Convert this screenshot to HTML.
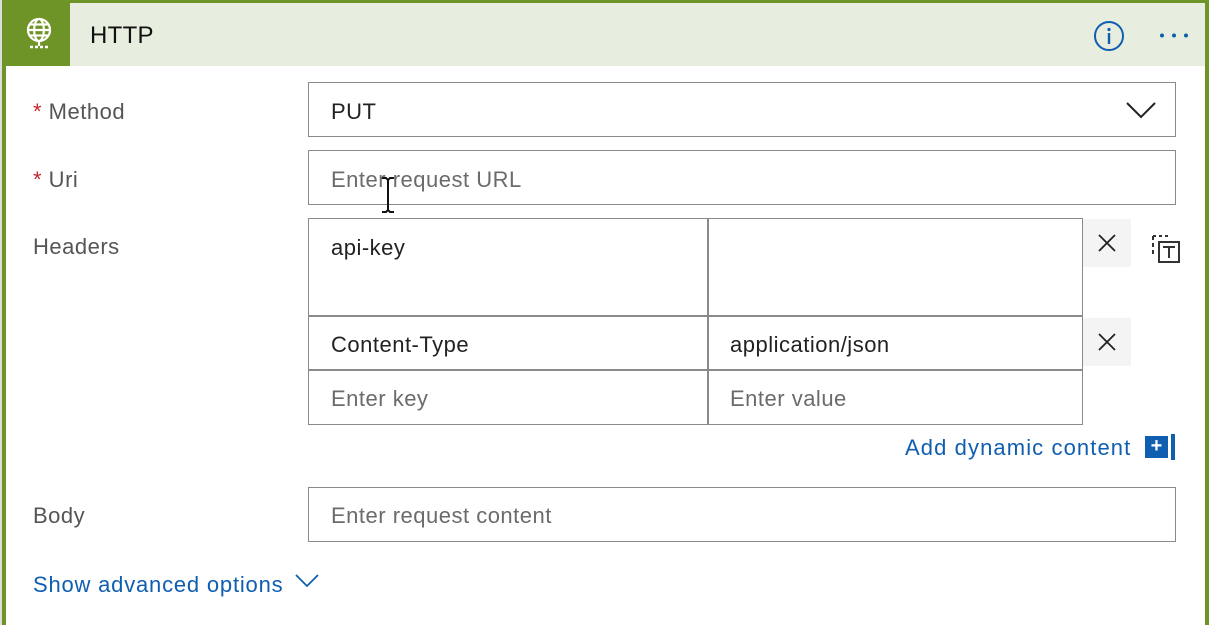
<!DOCTYPE html>
<html><head><style>
html,body{margin:0;width:1210px;height:625px;overflow:hidden;background:#fff;font-family:"Liberation Sans",sans-serif;position:relative}
.a{position:absolute}
.card{left:2px;top:0;width:1207px;height:625px;border:4px solid #6e9326;border-top-width:3px;border-bottom:0;box-sizing:border-box}
.hdr{left:6px;top:3px;width:1199px;height:63px;background:#e7eedf}
.ico{left:6px;top:3px;width:64px;height:63px;background:#6e9326}
.t,.lab,.ph,.blue{font-size:22px;letter-spacing:0.5px;white-space:nowrap}
.t{color:#222}
.lab{color:#555}
.star{color:#c4262e}
.box{border:1px solid #8a8a8a;box-sizing:border-box;background:#fff}
.ph{color:#6b6b6b}
.x{background:#f4f4f4;width:48px;height:48px}
.blue{color:#0f5eb0}
</style></head><body>
<div class="a card"></div>
<div class="a" style="left:0;top:0;width:2px;height:625px;background:#ddd"></div>
<div class="a hdr"></div>
<div class="a ico"></div>
<svg class="a" style="left:23px;top:16px" width="32" height="36" viewBox="0 0 32 36" fill="none" stroke="#fff" stroke-width="2.2">
<circle cx="16" cy="14" r="11"/><ellipse cx="16" cy="14" rx="4.8" ry="11"/><line x1="5" y1="14" x2="27" y2="14"/><line x1="6.5" y1="8.5" x2="25.5" y2="8.5"/><line x1="6.5" y1="19.5" x2="25.5" y2="19.5"/><line x1="16" y1="25" x2="16" y2="30"/><line x1="7" y1="31" x2="25" y2="31" stroke-width="2.6" stroke-dasharray="3 2"/></svg>
<div class="a t" style="left:90px;top:22px;font-size:24px;color:#111;letter-spacing:0.3px">HTTP</div>
<svg class="a" style="left:1093px;top:20px" width="32" height="32" viewBox="0 0 32 32"><circle cx="16" cy="16" r="14" fill="none" stroke="#0f5eb0" stroke-width="2"/><circle cx="16" cy="9.5" r="1.6" fill="#0f5eb0"/><rect x="14.8" y="13" width="2.4" height="11" fill="#0f5eb0"/></svg>
<svg class="a" style="left:1158px;top:32px" width="32" height="8"><circle cx="4" cy="3.5" r="2" fill="#0f5eb0"/><circle cx="16" cy="3.5" r="2" fill="#0f5eb0"/><circle cx="28" cy="3.5" r="2" fill="#0f5eb0"/></svg>

<div class="a lab" style="left:33px;top:99px"><span class="star">*</span> Method</div>
<div class="a box" style="left:308px;top:82px;width:868px;height:55px"></div>
<div class="a t" style="left:331px;top:99px">PUT</div>
<svg class="a" style="left:1125px;top:100px" width="32" height="20"><path d="M2 3 L16 17 L30 3" fill="none" stroke="#222" stroke-width="2"/></svg>

<div class="a lab" style="left:33px;top:167px"><span class="star">*</span> Uri</div>
<div class="a box" style="left:308px;top:150px;width:868px;height:55px"></div>
<div class="a ph" style="left:331px;top:167px">Enter request URL</div>
<svg class="a" style="left:378px;top:176px" width="20" height="38"><path d="M4 2h4l2 2 2-2h4M10 4v30M4 36h4l2-2 2 2h4" fill="none" stroke="#111" stroke-width="2"/></svg>

<div class="a lab" style="left:33px;top:234px">Headers</div>
<div class="a box" style="left:308px;top:218px;width:775px;height:207px"></div>
<div class="a" style="left:707px;top:218px;width:2px;height:207px;background:#8a8a8a"></div>
<div class="a" style="left:308px;top:315px;width:775px;height:2px;background:#8a8a8a"></div>
<div class="a" style="left:308px;top:369px;width:775px;height:2px;background:#8a8a8a"></div>
<div class="a t" style="left:331px;top:235px">api-key</div>
<div class="a t" style="left:331px;top:332px">Content-Type</div>
<div class="a t" style="left:730px;top:332px">application/json</div>
<div class="a ph" style="left:331px;top:386px">Enter key</div>
<div class="a ph" style="left:730px;top:386px">Enter value</div>
<div class="a x" style="left:1083px;top:219px"></div>
<div class="a x" style="left:1083px;top:318px"></div>
<svg class="a" style="left:1097px;top:233px" width="20" height="20"><path d="M2 2L18 18M18 2L2 18" stroke="#222" stroke-width="1.8"/></svg>
<svg class="a" style="left:1097px;top:332px" width="20" height="20"><path d="M2 2L18 18M18 2L2 18" stroke="#222" stroke-width="1.8"/></svg>
<svg class="a" style="left:1150px;top:233px" width="32" height="32" viewBox="0 0 32 32" fill="none" stroke="#333" stroke-width="2"><path d="M3 3h3M9 3h3M15 3h3M3 3v4M3 10v4M3 17v4"/><rect x="9" y="9" width="20" height="20"/><path d="M13 14h12M19 14v11"/></svg>

<div class="a blue" style="left:905px;top:435px;letter-spacing:1.1px">Add dynamic content</div>
<div class="a" style="left:1145px;top:436px;width:23px;height:22px;background:#0f5eb0;color:#fff;font-size:20px;font-weight:bold;text-align:center;line-height:21px">+</div>
<div class="a" style="left:1171px;top:434px;width:4px;height:26px;background:#0f5eb0"></div>

<div class="a lab" style="left:33px;top:503px">Body</div>
<div class="a box" style="left:308px;top:487px;width:868px;height:55px"></div>
<div class="a ph" style="left:331px;top:503px">Enter request content</div>

<div class="a blue" style="left:33px;top:572px;letter-spacing:0.8px">Show advanced options</div>
<svg class="a" style="left:294px;top:573px" width="26" height="16"><path d="M2 2L13 13L24 2" fill="none" stroke="#0f5eb0" stroke-width="1.8"/></svg>
</body></html>
